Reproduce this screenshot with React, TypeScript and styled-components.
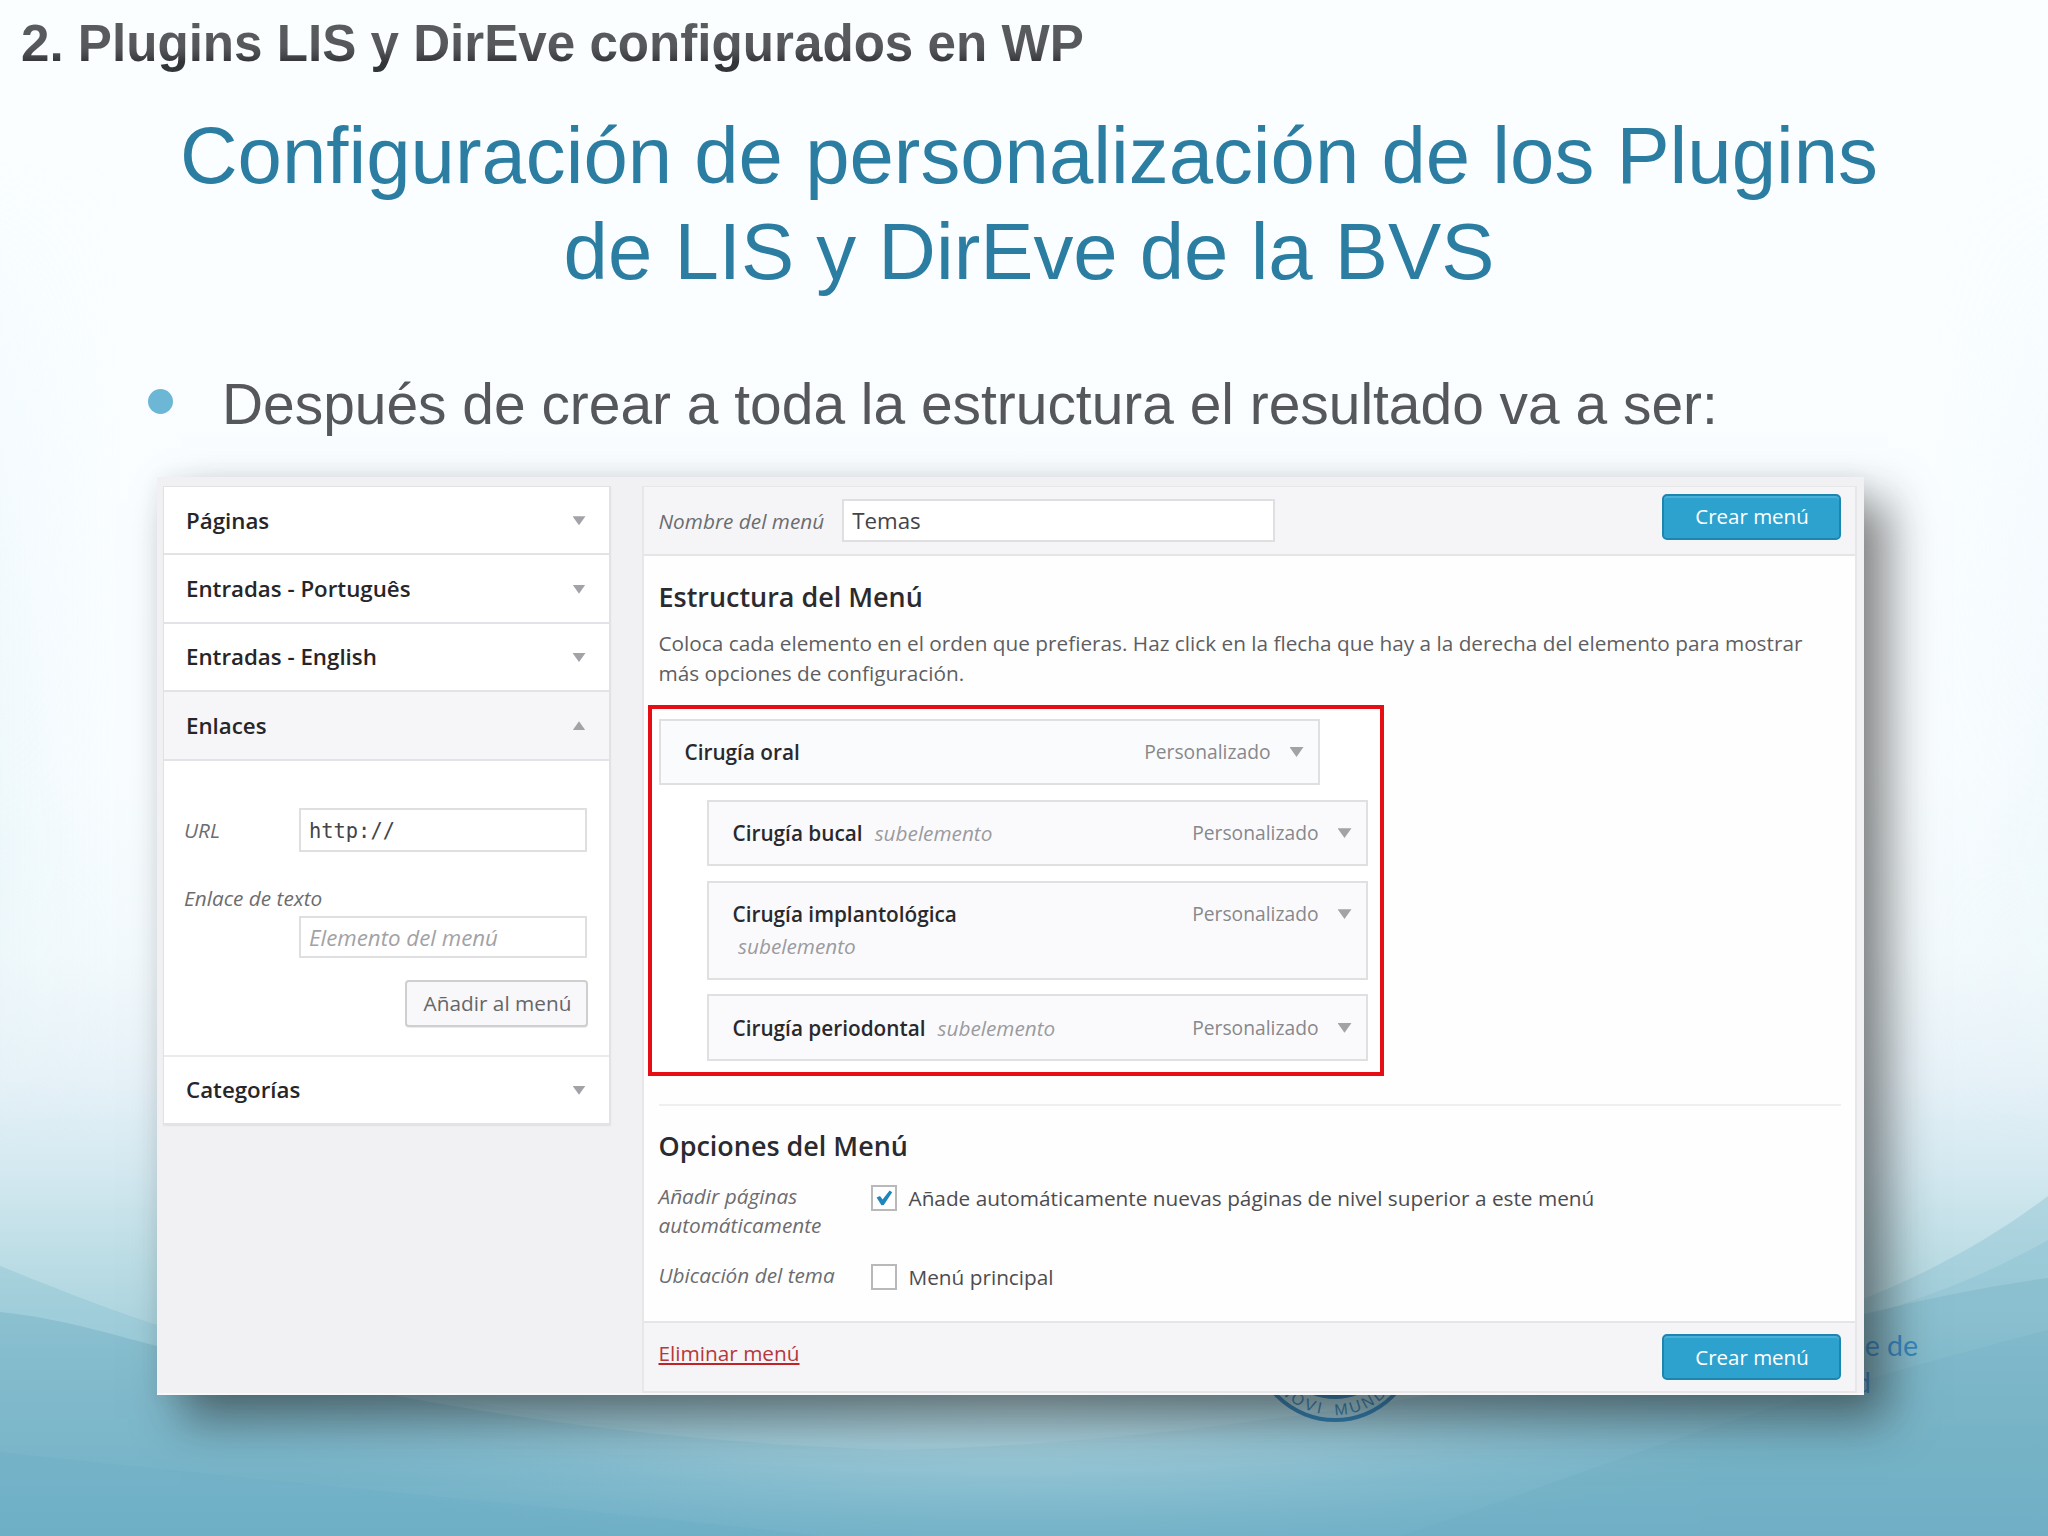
import React from "react";
import styled, { createGlobalStyle } from "styled-components";

const GlobalStyle = createGlobalStyle`
  *, *::before, *::after { box-sizing: border-box; }
  body { margin: 0; background: #fbfdff; }
  h1, h2, h3, p, ul { margin: 0; padding: 0; font-weight: inherit; }
`;

const UI_FONT = '"Open Sans", "Noto Sans", sans-serif';
const SLIDE_FONT = '"Liberation Sans", Arial, sans-serif';

const Slide = styled.main`
  position: relative;
  isolation: isolate;
  display: flex;
  flex-direction: column;
  width: 2048px;
  height: 1536px;
  overflow: hidden;
  font-family: ${SLIDE_FONT};
`;

const Backdrop = styled.svg`
  position: absolute;
  inset: 0;
  z-index: -1;
  width: 2048px;
  height: 1536px;
`;

const SectionTitle = styled.h2`
  align-self: flex-start;
  margin: 14px 0 0 21px;
  font-size: 51.15px;
  font-weight: 700;
  line-height: 60px;
  white-space: nowrap;
  color: transparent;
  background: linear-gradient(#5c5d60 0, #57585b 55%, #48494c 68%, #333437 80%);
  background-clip: text;
  -webkit-background-clip: text;
`;

const Title = styled.h1`
  margin: 34px 0 0 10px;
  font-size: 79.75px;
  line-height: 95.5px;
  text-align: center;
  color: #2b7da1;
`;

const Bullet = styled.p`
  display: flex;
  align-items: center;
  margin: 70px 0 0 148px;
  gap: 49px;
  font-size: 56.9px;
  line-height: 70px;
  color: #56575a;
  white-space: nowrap;

  &::before {
    content: "";
    width: 25px;
    height: 25px;
    margin-top: -6px;
    border-radius: 50%;
    background: #6cb7d5;
  }
`;

const Panel = styled.section`
  display: flex;
  align-items: flex-start;
  gap: 30.5px;
  width: 1707px;
  height: 918px;
  margin: 38px 0 0 157px;
  padding: 9px 7px 0 6px;
  background: #f1f0f3;
  border-bottom: 2px solid #f7f8f9;
  box-shadow: 24px 24px 44px rgba(30, 30, 30, 0.54), 0 0 18px rgba(60, 60, 70, 0.06);
  font-family: ${UI_FONT};
  font-size: 20.78px;
  color: #4c4c50;
`;

const Accordion = styled.div`
  width: 448px;
  flex: none;
  border: 1.5px solid #e2e2e6;
  border-width: 1px 2px 0 1.5px;
  background: #fff;
  box-shadow: 0 1.5px 1.5px rgba(0, 0, 0, 0.05);
`;

const AccordionRow = styled.div<{ $open?: boolean }>`
  display: flex;
  align-items: center;
  justify-content: space-between;
  height: 68.4px;
  padding: 0 23.5px 0 22px;
  border-bottom: 2px solid #e3e3e7;
  background: ${(p) => (p.$open ? "#f6f5f8" : "#fff")};
  font-size: 22.3px;
  font-weight: 600;
  color: #26262a;
`;

const Arrow = styled.span<{ $up?: boolean; $size?: number }>`
  flex: none;
  width: ${(p) => p.$size ?? 13}px;
  height: ${(p) => (p.$size ?? 13) * 0.7}px;
  margin-top: 1px;
  background: #a3a3a7;
  clip-path: ${(p) => (p.$up ? "polygon(0 100%, 50% 0, 100% 100%)" : "polygon(0 0, 100% 0, 50% 100%)")};
`;

const LinkForm = styled.div`
  display: flex;
  flex-direction: column;
  height: 296px;
  padding: 47px 22px 0 20px;
  border-bottom: 2px solid #ebebee;
`;

const FieldRow = styled.div`
  display: flex;
  align-items: center;
  justify-content: space-between;
`;

const Label = styled.label`
  font-style: italic;
  line-height: 30px;
  color: #6c6c70;
`;

const FormLabel = styled(Label)`
  margin: 31px 0 3px;
`;

const Field = styled.div<{ $width: number; $height: number }>`
  display: flex;
  align-items: center;
  width: ${(p) => p.$width}px;
  height: ${(p) => p.$height}px;
  padding: 0 8px;
  border: 2px solid #dfdfe2;
  background: #fff;
  font-size: 22.3px;
  color: #444448;
`;

const UrlField = styled(Field)`
  padding-top: 3px;
  font-family: "DejaVu Sans Mono", monospace;
  font-size: 20.4px;
`;

const PlaceholderField = styled(Field)`
  align-self: flex-end;
  font-style: italic;
  color: #a2a2a6;
`;

const SecondaryButton = styled.button`
  align-self: flex-end;
  width: 183px;
  height: 46.5px;
  margin: 22px -1px 0 0;
  padding: 0 0 0 2px;
  border: 2px solid #cfcfd2;
  border-radius: 4px;
  background: #f8f7f9;
  box-shadow: 0 1px 0 rgba(0, 0, 0, 0.08);
  font: 20.78px ${UI_FONT};
  color: #66666a;
`;

const PrimaryButton = styled.button`
  width: 179px;
  height: 46px;
  padding: 0 0 1px 1px;
  border: 2px solid #1c86b0;
  border-radius: 5px;
  background: #2ea2cf;
  box-shadow: inset 0 2px 0 rgba(120, 200, 230, 0.4);
  font: 20.5px ${UI_FONT};
  color: #fff;
`;

const Editor = styled.div`
  display: flex;
  flex-direction: column;
  width: 1215.5px;
  height: 907px;
  border: 2px solid #e7e7ea;
  border-top-width: 1px;
  background: #fefefe;
`;

const EditorHeader = styled.header`
  display: flex;
  align-items: center;
  flex: none;
  height: 69px;
  padding: 0 14px 0 15px;
  border-bottom: 2px solid #e5e5e8;
  background: #f5f5f7;

  ${Field} { margin-left: 18px; }
  ${PrimaryButton} { margin: -8px 0 0 auto; }
`;

const EditorBody = styled.div`
  flex: 1;
  padding: 21px 14px 0 15px;
`;

const Heading = styled.h3`
  font-size: 26.95px;
  font-weight: 600;
  line-height: 40px;
  color: #2b2b2f;
`;

const Intro = styled.p`
  margin-top: 10.5px;
  line-height: 30px;
  color: #5e5e62;
`;

const Highlight = styled.ul`
  display: flex;
  flex-direction: column;
  gap: 14.7px;
  width: 736px;
  height: 371px;
  margin: 17px 0 28.5px -11px;
  padding: 10px 0 0 7px;
  border: 4px solid #e60d15;
  background: #fff;
  list-style: none;
`;

const MenuItem = styled.li<{ $sub?: boolean; $tall?: boolean }>`
  display: flex;
  align-items: flex-start;
  flex: none;
  width: 661.5px;
  height: ${(p) => (p.$tall ? 99 : 66.4)}px;
  margin-left: ${(p) => (p.$sub ? 48 : 0)}px;
  padding: 15.5px 14.5px 0 24px;
  border: 2px solid #e0e0e3;
  background: ${(p) => (p.$sub ? "#fafafc" : "#fafbfc")};
  line-height: 32px;
`;

const ItemTitle = styled.span`
  width: 340px;
  font-weight: 600;
  color: #29292d;
`;

const SubMark = styled.em<{ $wrapped?: boolean }>`
  display: ${(p) => (p.$wrapped ? "block" : "inline")};
  margin-left: ${(p) => (p.$wrapped ? 5.5 : 12)}px;
  font-weight: 400;
  color: #9b9b9f;
`;

const ItemType = styled.span`
  display: flex;
  align-items: center;
  gap: 19px;
  margin-left: auto;
  font-size: 19.25px;
  line-height: 31px;
  color: #88888c;
`;

const Rule = styled.hr`
  height: 2px;
  margin: 0 0 20px;
  border: 0;
  background: #efeff1;
`;

const OptionRow = styled.div`
  display: grid;
  grid-template-columns: 212px 38px 1fr;
  align-items: start;
  line-height: 29px;

  ${Heading} + & { margin-top: 15.5px; }
  & + & { margin-top: 21.5px; }
`;

const OptionLabel = styled(Label)`
  width: 180px;
  line-height: 29px;
`;

const OptionText = styled.span`
  padding-top: 2px;
`;

const Checkbox = styled.span`
  display: grid;
  place-items: center;
  width: 26px;
  height: 26px;
  margin-top: 3px;
  border: 2px solid #b9b9bc;
  background: #fff;
`;

const EditorFooter = styled.footer`
  display: flex;
  align-items: flex-start;
  justify-content: space-between;
  flex: none;
  height: 70px;
  padding: 11px 14px 0 15px;
  border-top: 2px solid #e5e5e8;
  background: #f5f4f6;
`;

const DeleteLink = styled.a`
  margin-top: 4px;
  line-height: 30px;
  color: #b5383c;
  text-decoration: underline;
  text-decoration-color: #bd2328;
  text-decoration-thickness: 2px;
  text-underline-offset: 2px;
`;

function Background() {
  return (
    <Backdrop viewBox="0 0 2048 1536" aria-hidden="true">
      <defs>
        <linearGradient id="sky" x1="0" y1="0" x2="0" y2="1">
          <stop offset="0" stopColor="#fafeff" />
          <stop offset="0.5" stopColor="#f9fdff" />
          <stop offset="0.62" stopColor="#f3fafd" />
          <stop offset="0.7" stopColor="#e7f2f8" />
          <stop offset="0.76" stopColor="#d5e9f1" />
          <stop offset="0.82" stopColor="#bcdde5" />
          <stop offset="0.88" stopColor="#a6d1dd" />
          <stop offset="1" stopColor="#8fc3d3" />
        </linearGradient>
        <linearGradient id="edge" x1="0" y1="0" x2="1" y2="0">
          <stop offset="0" stopColor="#def2f8" stopOpacity="0.4" />
          <stop offset="0.06" stopColor="#ecf8fc" stopOpacity="0" />
          <stop offset="0.94" stopColor="#ecf8fc" stopOpacity="0" />
          <stop offset="1" stopColor="#e2f2f8" stopOpacity="0.3" />
        </linearGradient>
        <linearGradient id="edgeFade" x1="0" y1="0" x2="0" y2="1">
          <stop offset="0.1" stopColor="#000" />
          <stop offset="0.55" stopColor="#fff" />
          <stop offset="0.75" stopColor="#000" />
        </linearGradient>
        <mask id="edgeMask">
          <rect width="2048" height="1536" fill="url(#edgeFade)" />
        </mask>
        <linearGradient id="sea" gradientUnits="userSpaceOnUse" x1="0" y1="1310" x2="0" y2="1536">
          <stop offset="0" stopColor="#88bece" />
          <stop offset="0.4" stopColor="#7ab5c8" />
          <stop offset="1" stopColor="#6badc5" />
        </linearGradient>
        <radialGradient id="glow" gradientUnits="userSpaceOnUse" cx="0" cy="0" r="1" gradientTransform="translate(1020 1400) scale(820 150)">
          <stop offset="0" stopColor="#b4d6e0" stopOpacity="0.95" />
          <stop offset="0.5" stopColor="#9fcbd9" stopOpacity="0.6" />
          <stop offset="1" stopColor="#86bccf" stopOpacity="0" />
        </radialGradient>
      </defs>
      <rect width="2048" height="1536" fill="url(#sky)" />
      <rect width="2048" height="1536" fill="url(#edge)" mask="url(#edgeMask)" />
      <path d="M0 1266C60 1290 100 1306 157 1325C420 1410 700 1445 1000 1450C1350 1450 1700 1370 1885 1290C1950 1262 2000 1232 2048 1196V1536H0Z" fill="#8fc4d2" fillOpacity="0.45" />
      <path d="M1700 1380C1800 1350 1860 1320 1900 1305C1960 1285 2010 1262 2048 1240V1536H1700Z" fill="#86bdce" fillOpacity="0.35" />
      <path d="M0 1312C60 1318 110 1334 157 1346C400 1400 600 1440 900 1450C1300 1440 1700 1340 1864 1314C1930 1298 1990 1286 2048 1278V1536H0Z" fill="url(#sea)" fillOpacity="0.82" />
      <rect y="1200" width="2048" height="336" fill="url(#glow)" />
      <path d="M0 1452C350 1490 600 1510 820 1536H0Z" fill="#62a8c3" fillOpacity="0.2" />
      <path d="M1400 1536C1600 1470 1700 1420 2048 1330V1536Z" fill="#68acbf" fillOpacity="0.2" />

      <g fill="none" stroke="#2f7fb4">
        <circle cx="1335" cy="1338.5" r="81.5" strokeWidth="4" />
        <circle cx="1335" cy="1338.5" r="58" strokeWidth="5" />
      </g>
      <path id="sealArc" d="M1258.5 1338.5A76.5 76.5 0 0 0 1411.5 1338.5" fill="none" />
      <text fill="#3480b0" fontFamily="Liberation Sans, Arial, sans-serif" fontSize="16" letterSpacing="3" wordSpacing="4" textAnchor="middle">
        <textPath href="#sealArc" startOffset="51%">NOVI MUNDI</textPath>
      </text>
      <g fill="#3488c2" fontFamily="Lato, sans-serif" fontSize="28.5" textAnchor="end">
        <text x="1918" y="1355.5">e de</text>
        <text x="1871" y="1393">d</text>
      </g>
    </Backdrop>
  );
}

const subItems = [
  { title: "Cirugía bucal" },
  { title: "Cirugía implantológica", wrapped: true },
  { title: "Cirugía periodontal" },
];

function TypeTag() {
  return (
    <ItemType>
      Personalizado
      <Arrow $size={14} />
    </ItemType>
  );
}

export default function App() {
  return (
    <>
      <GlobalStyle />
      <Slide>
        <Background />
        <SectionTitle>2. Plugins LIS y DirEve configurados en WP</SectionTitle>
        <Title>
          Configuración de personalización de los Plugins
          <br />
          de LIS y DirEve de la BVS
        </Title>
        <Bullet>Después de crear a toda la estructura el resultado va a ser:</Bullet>

        <Panel>
          <Accordion>
            {["Páginas", "Entradas - Português", "Entradas - English"].map((name) => (
              <AccordionRow key={name}>
                {name}
                <Arrow />
              </AccordionRow>
            ))}
            <AccordionRow $open>
              Enlaces
              <Arrow $up />
            </AccordionRow>
            <LinkForm>
              <FieldRow>
                <Label>URL</Label>
                <UrlField $width={288} $height={44.5}>http://</UrlField>
              </FieldRow>
              <FormLabel>Enlace de texto</FormLabel>
              <PlaceholderField $width={288} $height={42}>Elemento del menú</PlaceholderField>
              <SecondaryButton>Añadir al menú</SecondaryButton>
            </LinkForm>
            <AccordionRow>
              Categorías
              <Arrow />
            </AccordionRow>
          </Accordion>

          <Editor>
            <EditorHeader>
              <Label>Nombre del menú</Label>
              <Field $width={433} $height={43.5}>Temas</Field>
              <PrimaryButton>Crear menú</PrimaryButton>
            </EditorHeader>
            <EditorBody>
              <Heading>Estructura del Menú</Heading>
              <Intro>
                Coloca cada elemento en el orden que prefieras. Haz click en la flecha que hay a la derecha del elemento para mostrar
                <br />
                más opciones de configuración.
              </Intro>
              <Highlight>
                <MenuItem>
                  <ItemTitle>Cirugía oral</ItemTitle>
                  <TypeTag />
                </MenuItem>
                {subItems.map((item) => (
                  <MenuItem key={item.title} $sub $tall={item.wrapped}>
                    <ItemTitle>
                      {item.title}
                      <SubMark $wrapped={item.wrapped}>subelemento</SubMark>
                    </ItemTitle>
                    <TypeTag />
                  </MenuItem>
                ))}
              </Highlight>
              <Rule />
              <Heading>Opciones del Menú</Heading>
              <OptionRow>
                <OptionLabel>Añadir páginas automáticamente</OptionLabel>
                <Checkbox>
                  <svg width="20" height="20" viewBox="0 0 20 20" aria-hidden="true">
                    <path d="M2.6 9.4L6 8L8.6 11.6L15.6 2.6L18.2 4.2L9.8 17L7.4 17.2Z" fill="#1e86bd" />
                  </svg>
                </Checkbox>
                <OptionText>Añade automáticamente nuevas páginas de nivel superior a este menú</OptionText>
              </OptionRow>
              <OptionRow>
                <OptionLabel>Ubicación del tema</OptionLabel>
                <Checkbox />
                <OptionText>Menú principal</OptionText>
              </OptionRow>
            </EditorBody>
            <EditorFooter>
              <DeleteLink>Eliminar menú</DeleteLink>
              <PrimaryButton>Crear menú</PrimaryButton>
            </EditorFooter>
          </Editor>
        </Panel>
      </Slide>
    </>
  );
}
